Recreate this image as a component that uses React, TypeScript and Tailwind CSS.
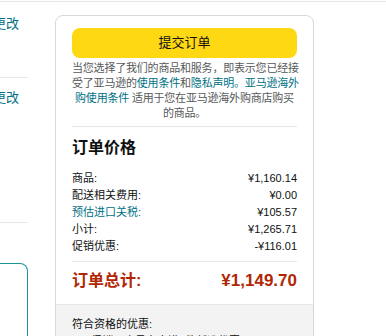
import React from "react";

const font = { fontFamily: '"Liberation Sans", "Noto Sans CJK SC", sans-serif' };

function Row({ label, value, link }: { label: string; value: string; link?: boolean }) {
  return (
    <div className="flex justify-between leading-[17px] text-[11px]">
      <span className={link ? "text-[#007185]" : "text-[#0F1111]"}>{label}</span>
      <span className="text-[#0F1111]">{value}</span>
    </div>
  );
}

export default function App() {
  return (
    <div className="w-[386px] h-[336px] overflow-hidden bg-white relative" style={font}>
      <div className="pt-px">
        <div className="border-t border-[#e7e7e7]" />
      </div>
      <div className="flex items-start">
        {/* left column */}
        <div className="w-[28px] flex flex-col shrink-0">
          <div className="mt-[12px] -ml-[7px] whitespace-nowrap text-[13px] leading-[20px] text-[#007185]">更改</div>
          <div className="mt-[43px] border-t border-[#e7e7e7]" />
          <div className="mt-[10px] -ml-[7px] whitespace-nowrap text-[13px] leading-[20px] text-[#007185]">更改</div>
          <div className="mt-[114px] border-t border-[#e7e7e7]" />
          <div className="mt-[40px] h-[120px] border-[1.5px] border-l-0 border-[#1a939b] rounded-tr-[8px]" />
        </div>

        {/* order summary card */}
        <div className="ml-[27px] mt-[13px] w-[259px] border border-[#d5d9d9] rounded-[8px] overflow-hidden shrink-0">
          <div className="px-[16px] pt-[12px] pb-[11px]">
            <div className="h-[30px] rounded-[8px] bg-[#FFD814] flex items-center justify-center text-[13px] text-[#0F1111]">
              提交订单
            </div>
            <p className="mt-[3px] text-center text-[11px] leading-[15px] tracking-[-0.2px] text-[#565959] whitespace-nowrap">
              当您选择了我们的商品和服务，即表示您已经接
              <br />
              受了亚马逊的<span className="text-[#007185]">使用条件</span>和
              <span className="text-[#007185]">隐私声明。亚马逊海外</span>
              <br />
              <span className="text-[#007185]">购使用条件</span> 适用于您在亚马逊海外购商店购买
              <br />
              的商品。
            </p>
            <div className="mt-[5px] border-t border-[#e7e7e7]" />
            <div className="mt-[9px] text-[16px] leading-[24px] font-bold text-[#0F1111]">订单价格</div>
            <div className="mt-[10px]">
              <Row label="商品:" value="¥1,160.14" />
              <Row label="配送相关费用:" value="¥0.00" />
              <Row label="预估进口关税:" value="¥105.57" link />
              <Row label="小计:" value="¥1,265.71" />
              <Row label="促销优惠:" value="-¥116.01" />
            </div>
            <div className="mt-[6px] border-t border-[#e7e7e7]" />
            <div className="mt-[7px] flex justify-between items-center text-[17px] leading-[24px] font-bold text-[#B12704]">
              <span className="text-[16px]">订单总计:</span>
              <span>¥1,149.70</span>
            </div>
          </div>
          <div className="border-t border-[#e7e7e7] bg-[#f3f3f3] px-[16px] pt-[11px] pb-[20px] text-[11px] leading-[17px] text-[#0F1111]">
            <div>符合资格的优惠:</div>
            <div className="pl-[12px]">• 促销：会员专享满1件任选优惠</div>
          </div>
        </div>
      </div>
    </div>
  );
}
